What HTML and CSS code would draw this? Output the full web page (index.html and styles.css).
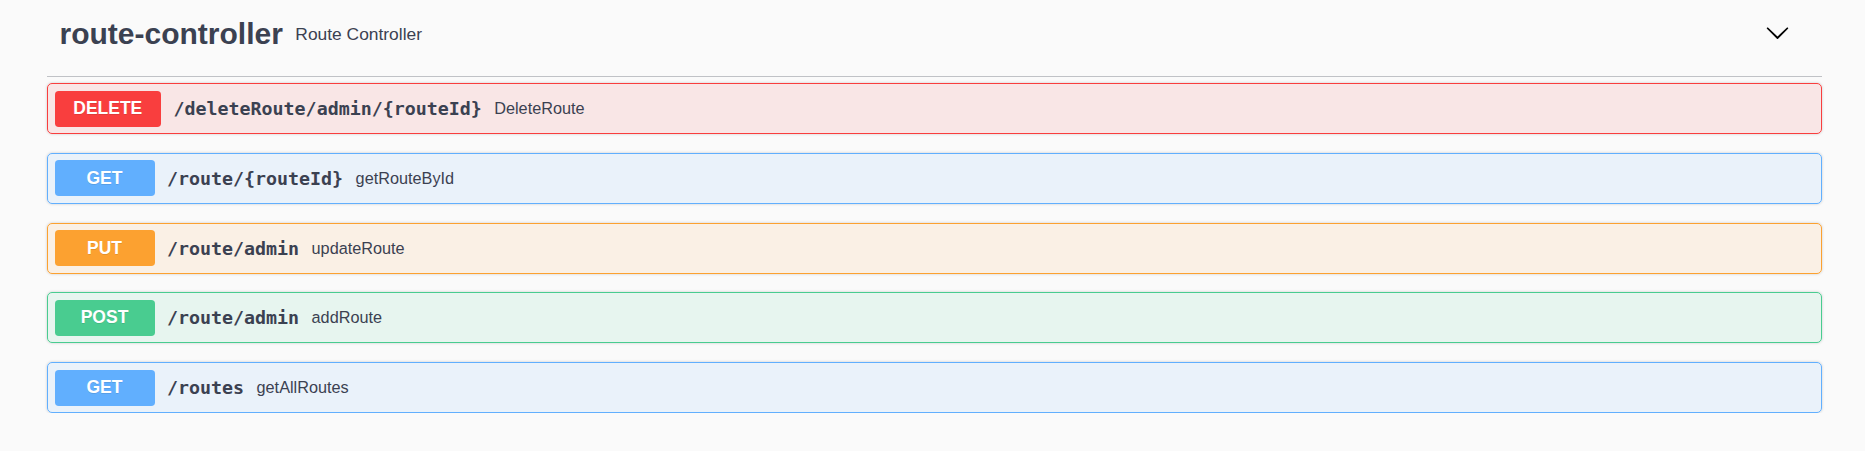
FILE: index.html
```html
<!DOCTYPE html>
<html>
<head>
<meta charset="utf-8">
<link rel="stylesheet" href="styles.css">
</head>
<body>
<div class="wrapper">
  <div class="tag-header">
    <h3 class="tag-title">route-controller</h3>
    <span class="tag-desc">Route Controller</span>
    <span class="spacer"></span>
    <svg class="arrow" viewBox="0 0 20 20" width="25" height="25"><path d="M17.418 6.109c.272-.268.709-.268.979 0s.271.701 0 .969l-7.908 7.83c-.27.268-.707.268-.979 0l-7.908-7.83c-.27-.268-.27-.701 0-.969.271-.268.709-.268.979 0L10 13.25l7.418-7.141z"/></svg>
  </div>
  <div class="ops">
    <div class="op op-delete">
      <span class="method">DELETE</span>
      <span class="path">/deleteRoute/admin/{routeId}</span>
      <span class="desc">DeleteRoute</span>
    </div>
    <div class="op op-get">
      <span class="method">GET</span>
      <span class="path">/route/{routeId}</span>
      <span class="desc">getRouteById</span>
    </div>
    <div class="op op-put">
      <span class="method">PUT</span>
      <span class="path">/route/admin</span>
      <span class="desc">updateRoute</span>
    </div>
    <div class="op op-post">
      <span class="method">POST</span>
      <span class="path">/route/admin</span>
      <span class="desc">addRoute</span>
    </div>
    <div class="op op-get">
      <span class="method">GET</span>
      <span class="path">/routes</span>
      <span class="desc">getAllRoutes</span>
    </div>
  </div>
</div>
</body>
</html>
```
FILE: styles.css
```css
html, body {
  margin: 0;
  padding: 0;
  background: #fafafa;
}
body {
  font-family: "Liberation Sans", Arial, sans-serif;
  color: #3b4151;
}
.wrapper {
  padding: 0 43px 0 47px;
}
.tag-header {
  display: flex;
  align-items: flex-start;
  padding: 17px 32px 24.5px 12.5px;
  border-bottom: 1px solid rgba(59, 65, 81, 0.3);
  margin-bottom: 6px;
}
.tag-title {
  margin: 0;
  font-size: 30px;
  line-height: 34.5px;
  font-weight: bold;
  color: #3b4151;
}
.tag-desc {
  font-size: 17.4px;
  line-height: 34.5px;
  padding-left: 12.5px;
  color: #3b4151;
}
.spacer {
  flex: 1;
}
.arrow {
  display: block;
  margin-top: 2.7px;
  fill: #000;
}
.ops {
  display: flex;
  flex-direction: column;
  gap: 18.75px;
}
.op {
  display: flex;
  align-items: center;
  height: 51px;
  box-sizing: border-box;
  padding: 0 6.5px;
  border: 1px solid;
  border-radius: 5px;
  box-shadow: 0 0 3px rgba(0, 0, 0, 0.19);
}
.method {
  box-sizing: border-box;
  min-width: 100px;
  padding: 7.5px 18.75px;
  font-size: 17.5px;
  line-height: 21px;
  font-weight: bold;
  color: #fff;
  text-align: center;
  border-radius: 3.75px;
  text-shadow: 0 1px 0 rgba(0, 0, 0, 0.1);
}
.path {
  font-family: "DejaVu Sans Mono", "Liberation Mono", monospace;
  font-weight: bold;
  font-size: 18.3px;
  padding: 0 12.5px;
  color: #3b4151;
}
.desc {
  font-size: 16.25px;
  color: #3b4151;
}
.op-delete {
  background: rgba(249, 62, 62, 0.1);
  border-color: #f93e3e;
}
.op-delete .method { background: #f93e3e; }
.op-get {
  background: rgba(97, 175, 254, 0.1);
  border-color: #61affe;
}
.op-get .method { background: #61affe; }
.op-put {
  background: rgba(252, 161, 48, 0.1);
  border-color: #fca130;
}
.op-put .method { background: #fca130; }
.op-post {
  background: rgba(73, 204, 144, 0.1);
  border-color: #49cc90;
}
.op-post .method { background: #49cc90; }
```
